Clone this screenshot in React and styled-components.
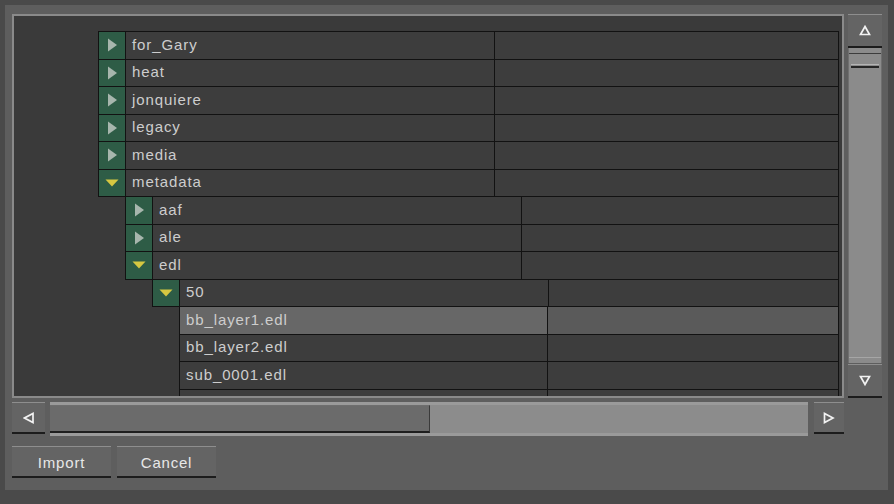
import React from "react";
import styled, { createGlobalStyle } from "styled-components";

const Global = createGlobalStyle`
  body {
    margin: 0;
    background: #4a4a4a;
  }
`;

const Window = styled.div`
  width: 894px;
  height: 504px;
  box-sizing: border-box;
  padding: 5px 6px 14px 5px;
  background: #4a4a4a;
  font-family: "Liberation Sans", Arial, sans-serif;
`;

const Panel = styled.div`
  height: 100%;
  box-sizing: border-box;
  background: #5e5e5e;
  padding: 9px 6px 0 7px;
  display: grid;
  grid-template-columns: 832px 34px;
  grid-template-rows: 384px 34px 32px;
  column-gap: 4px;
  row-gap: 4px;
`;

const Frame = styled.div`
  grid-column: 1;
  grid-row: 1;
  box-sizing: border-box;
  border: 2px solid #8a8a8a;
  background: #3a3a3a;
  padding-top: 15px;
  overflow: hidden;
`;

const Row = styled.div`
  display: flex;
  height: 28.5px;
  box-sizing: border-box;
  border: 1px solid #121212;
  margin: 0 3px -1px ${(p) => 84 + 27 * p.level}px;
  background: #3d3d3d;
`;

const Toggle = styled.div`
  width: 27px;
  flex: none;
  box-sizing: border-box;
  border-right: 1px solid #121212;
  background: #2e5c46;
  display: flex;
  align-items: center;
  justify-content: center;
`;

const Name = styled.div`
  width: ${(p) => (p.leaf ? 368 : 369)}px;
  flex: none;
  box-sizing: border-box;
  border-right: 1px solid #121212;
  padding: 0 0 2px 6px;
  display: flex;
  align-items: center;
  color: #cdcdcd;
  font-size: 15px;
  letter-spacing: 0.9px;
  background: ${(p) => (p.selected ? "#676767" : "transparent")};
`;

const Value = styled.div`
  flex: 1;
  background: ${(p) => (p.selected ? "#5a5a5a" : "transparent")};
`;

const Bevel = styled.div`
  box-sizing: border-box;
  background: #646464;
  border-top: 1px solid #8e8e8e;
  border-bottom: 2px solid #1c1c1c;
  display: flex;
  align-items: center;
  justify-content: center;
`;

const VScroll = styled.div`
  grid-column: 2;
  grid-row: 1;
  display: flex;
  flex-direction: column;
`;

const VButton = styled(Bevel)`
  height: ${(p) => p.h}px;
  flex: none;
`;

const VTrack = styled.div`
  flex: 1;
  margin: 0 0 1px;
  background: #8b8b8b;
  border-left: 1px solid #6f6f6f;
  border-right: 1px solid #6f6f6f;
  display: flex;
  flex-direction: column;
`;

const VTrough = styled.div`
  margin-top: 5px;
  flex: 1;
  border-top: 1px solid #3c3c3c;
  padding: 10px 2px 0;
  display: flex;
  flex-direction: column;
  justify-content: space-between;
`;

const Grip = styled.div`
  height: 1px;
  border-top: 1px solid #b4b4b4;
  border-bottom: 2px solid #262626;
`;

const BottomGrip = styled.div`
  height: 0;
  margin: 0 -2px 5px;
  border-top: 1px solid #a6a6a6;
`;

const HScroll = styled.div`
  grid-column: 1;
  grid-row: 2;
  display: flex;
  align-items: stretch;
`;

const HButton = styled(Bevel)`
  width: ${(p) => p.w}px;
  flex: none;
  height: 32px;
`;

const HTrack = styled.div`
  flex: 1;
  margin: 0 6px 0 5px;
  display: flex;
  box-sizing: border-box;
  border-top: 3px solid #9a9a9a;
  border-bottom: 3px solid #9a9a9a;
  background: #8c8c8c;
`;

const HThumb = styled.div`
  width: 380px;
  box-sizing: border-box;
  background: #6b6b6b;
  border-bottom: 2px solid #1e1e1e;
  border-right: 1px solid #3a3a3a;
  border-top: 1px solid #6e6e6e;
`;

const Actions = styled.div`
  grid-column: 1 / span 2;
  grid-row: 3;
  display: flex;
  gap: 6px;
  margin-top: 6px;
`;

const Button = styled(Bevel)`
  width: 99px;
  height: 32px;
  padding-top: 2px;
  color: #e8e8e8;
  font-size: 15px;
  letter-spacing: 0.8px;
`;

const RightArrow = () => (
  <svg width="11" height="14" viewBox="0 0 11 14">
    <polygon points="1,0.5 10,7 1,13.5" fill="#a7b6ad" />
  </svg>
);

const DownArrow = () => (
  <svg width="14" height="8" viewBox="0 0 14 8">
    <polygon points="0.5,0.5 13.5,0.5 7,7.5" fill="#d6c741" />
  </svg>
);

const Hollow = ({ dir }) => {
  const pts = {
    up: "6,1.5 10.5,9.5 1.5,9.5",
    down: "1.5,1.5 10.5,1.5 6,9.5",
    left: "10,1.5 10,10.5 1.5,6",
    right: "1.5,1.5 1.5,10.5 10,6",
  }[dir];
  return (
    <svg width="12" height="12" viewBox="0 0 12 12">
      <polygon points={pts} fill="none" stroke="#f2f2f2" strokeWidth="1.7" />
    </svg>
  );
};

const rows = [
  { level: 0, name: "for_Gary", state: "closed" },
  { level: 0, name: "heat", state: "closed" },
  { level: 0, name: "jonquiere", state: "closed" },
  { level: 0, name: "legacy", state: "closed" },
  { level: 0, name: "media", state: "closed" },
  { level: 0, name: "metadata", state: "open" },
  { level: 1, name: "aaf", state: "closed" },
  { level: 1, name: "ale", state: "closed" },
  { level: 1, name: "edl", state: "open" },
  { level: 2, name: "50", state: "open" },
  { level: 3, name: "bb_layer1.edl", selected: true },
  { level: 3, name: "bb_layer2.edl" },
  { level: 3, name: "sub_0001.edl" },
  { level: 3, name: "sub_0002.edl" },
];

export default function App() {
  return (
    <Window>
      <Global />
      <Panel>
        <Frame>
          {rows.map((r) => (
            <Row key={r.name} level={r.level}>
              {r.state && (
                <Toggle>{r.state === "open" ? <DownArrow /> : <RightArrow />}</Toggle>
              )}
              <Name leaf={!r.state} selected={r.selected}>
                {r.name}
              </Name>
              <Value selected={r.selected} />
            </Row>
          ))}
        </Frame>
        <VScroll>
          <VButton h={34}>
            <Hollow dir="up" />
          </VButton>
          <VTrack>
            <VTrough>
              <Grip />
              <BottomGrip />
            </VTrough>
          </VTrack>
          <VButton h={34}>
            <Hollow dir="down" />
          </VButton>
        </VScroll>
        <HScroll>
          <HButton w={33}>
            <Hollow dir="left" />
          </HButton>
          <HTrack>
            <HThumb />
          </HTrack>
          <HButton w={30}>
            <Hollow dir="right" />
          </HButton>
        </HScroll>
        <Actions>
          <Button>Import</Button>
          <Button>Cancel</Button>
        </Actions>
      </Panel>
    </Window>
  );
}
